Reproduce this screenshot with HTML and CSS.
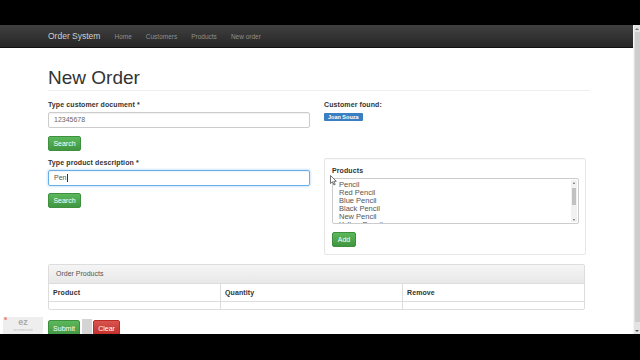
FILE: index.html
```html
<!DOCTYPE html>
<html>
<head>
<meta charset="utf-8">
<link rel="stylesheet" href="styles.css">
</head>
<body>
<div class="screen">
  <div class="letterbox top"></div>
  <div class="viewport">
    <div class="page">
      <nav class="navbar">
        <div class="nav-inner">
          <span class="brand">Order System</span>
          <a class="nav-link">Home</a>
          <a class="nav-link">Customers</a>
          <a class="nav-link">Products</a>
          <a class="nav-link">New order</a>
        </div>
      </nav>
      <main class="container">
        <h1 class="page-header">New Order</h1>
        <div class="row">
          <div class="col">
            <label class="lbl">Type customer document *</label>
            <div class="input">12345678</div>
            <button class="btn btn-success btn-search">Search</button>
            <label class="lbl lbl-2">Type product description *</label>
            <div class="input focus">Pen<span class="caret"></span></div>
            <button class="btn btn-success btn-search">Search</button>
          </div>
          <div class="col">
            <label class="lbl lbl-found">Customer found:</label>
            <div class="badge-wrap"><span class="badge">Joan Souza</span></div>
            <div class="well">
              <label class="lbl lbl-products">Products</label>
              <div class="listbox">
                <div class="options">
                  <div>Pencil</div>
                  <div>Red Pencil</div>
                  <div>Blue Pencil</div>
                  <div>Black Pencil</div>
                  <div>New Pencil</div>
                  <div>Yellow Pencil</div>
                </div>
                <div class="lb-scroll">
                  <span class="arr up"></span>
                  <span class="lb-thumb"></span>
                  <span class="arr down"></span>
                </div>
              </div>
              <button class="btn btn-success btn-add">Add</button>
              <svg class="pointer" width="7" height="11" viewBox="0 0 7 11"><path d="M0.5 0.5 L0.5 8.5 L2.5 6.8 L4 10 L5.2 9.4 L3.8 6.3 L6.3 6.3 Z" fill="#fff" stroke="#333" stroke-width="0.7"/></svg>
            </div>
          </div>
        </div>
        <div class="panel">
          <div class="panel-heading">Order Products</div>
          <div class="tbl">
            <div class="th">Product</div>
            <div class="th">Quantity</div>
            <div class="th">Remove</div>
            <div class="td"></div>
            <div class="td"></div>
            <div class="td"></div>
          </div>
        </div>
        <div class="actions">
          <button class="btn btn-success btn-submit">Submit</button>
          <button class="btn btn-danger btn-clear">Clear</button>
        </div>
      </main>
    </div>
    <div class="vscroll">
      <span class="varr"></span>
      <span class="vthumb"></span>
      <span class="varr vdown"></span>
    </div>
  </div>
  <div class="letterbox bottom"></div>
  <div class="watermark"><span class="wm-dot"></span><span class="wm-text">ez</span><span class="wm-sub">screencast</span></div>
  <div class="ghost"></div>
</div>
</body>
</html>
```

FILE: styles.css
```css
* { box-sizing: border-box; }
html, body { margin: 0; padding: 0; background: #000; }
body { font-family: "Liberation Sans", Arial, sans-serif; color: #333; }

.screen { position: relative; width: 640px; height: 360px; overflow: hidden; background: #000; }
.letterbox { background: #000; }
.letterbox.top { height: 25px; }
.letterbox.bottom { height: 26px; }

.viewport { display: flex; height: 309px; overflow: hidden; }
.page { flex: 1; background: #fff; overflow: hidden; position: relative; }

.navbar {
  height: 23px;
  background: linear-gradient(#404040, #262626);
  border-bottom: 1px solid #111;
}
.nav-inner { display: flex; align-items: center; height: 100%; padding-left: 48px; }
.brand { font-size: 8.5px; color: #cfcfcf; margin-right: 7px; }
.nav-link { font-size: 6.5px; color: #8f8f8f; padding: 0 7px; }

.container { padding-left: 48px; width: 586px; }

.page-header {
  margin: 19px 0 0;
  font-size: 19px;
  line-height: 21px;
  font-weight: normal;
  color: #333;
  padding-bottom: 2px;
  border-bottom: 1px solid #eee;
  width: 542px;
}

.row { display: grid; grid-template-columns: 262px 262px; column-gap: 14px; align-items: start; }
.col { display: flex; flex-direction: column; align-items: flex-start; }

.lbl { display: block; font-size: 7px; line-height: 10px; font-weight: bold; color: #333; margin: 9px 0 2px; letter-spacing: 0.1px; }
.lbl-2 { margin-top: 7px; }
.lbl-found { margin-bottom: 3px; }
.lbl-products { margin: 0 0 2px; }

.input {
  width: 262px; height: 16px;
  border: 1px solid #ccc; border-radius: 2px;
  padding: 0 5px;
  font-size: 7px; line-height: 14px; color: #666;
  box-shadow: inset 0 1px 1px rgba(0,0,0,0.06);
  display: flex; align-items: center;
}
.input.focus {
  border-color: #66afe9;
  box-shadow: inset 0 1px 1px rgba(0,0,0,0.06), 0 0 3px rgba(102,175,233,0.6);
  color: #555;
}
.caret { display: inline-block; width: 1px; height: 8px; background: #333; margin-left: 1px; }

.btn {
  display: block;
  font-family: "Liberation Sans", Arial, sans-serif;
  font-size: 7px; line-height: 13px;
  color: #fff; padding: 0; text-align: center;
  border-radius: 2px; cursor: pointer;
}
.btn-success { background: linear-gradient(#5cb85c, #419641); border: 1px solid #3e8f3e; }
.btn-danger { background: linear-gradient(#d9534f, #c12e2a); border: 1px solid #b92c28; }
.btn-search { margin-top: 8px; width: 33px; height: 15px; }
.btn-search:last-child { margin-top: 7px; }

.badge-wrap { display: flex; height: 8px; }
.badge {
  display: block;
  height: 8px; line-height: 8px;
  padding: 0 4px;
  background: #3a7fc1;
  color: #fff;
  font-size: 5.5px; font-weight: bold;
  border-radius: 1px;
}

.well {
  position: relative;
  width: 262px;
  margin-top: 37px;
  border: 1px solid #e6e6e6;
  border-radius: 2px;
  padding: 7px;
  background: #fff;
  box-shadow: inset 0 1px 1px rgba(0,0,0,0.03);
}
.listbox {
  display: flex;
  width: 247px; height: 46px;
  border: 1px solid #ccc; border-radius: 2px;
  overflow: hidden;
}
.options { flex: 1; padding: 2px 0 0 6px; font-size: 7.5px; line-height: 8px; color: #555; overflow: hidden; }
.lb-scroll { width: 6px; margin: 1px; background: #f1f1f1; display: flex; flex-direction: column; align-items: center; }
.arr { width: 0; height: 0; border-left: 1.5px solid transparent; border-right: 1.5px solid transparent; margin: 1.5px 0; }
.arr.up { border-bottom: 2px solid #666; }
.arr.down { border-top: 2px solid #666; margin-top: auto; }
.lb-thumb { width: 4px; height: 17px; background: #c1c1c1; margin-top: 3px; }
.btn-add { margin-top: 8px; width: 24px; height: 15px; }
.pointer { position: absolute; left: 5px; top: 16px; }

.panel { margin-top: 9px; width: 537px; border: 1px solid #ddd; border-radius: 2px; }
.panel-heading {
  height: 19px; line-height: 18px;
  padding-left: 7px;
  font-size: 7px; color: #555;
  background: linear-gradient(#f5f5f5, #e8e8e8);
  border-bottom: 1px solid #ddd;
}
.tbl { display: grid; grid-template-columns: 172px 182px 1fr; }
.th { height: 18px; line-height: 18px; padding-left: 4px; font-size: 7px; font-weight: bold; color: #333; border-bottom: 1px solid #ddd; border-right: 1px solid #ddd; letter-spacing: 0.1px; }
.td { height: 7px; border-right: 1px solid #ddd; }
.th:nth-child(3), .td:nth-child(6) { border-right: none; }

.actions { display: flex; margin-top: 10px; }
.btn-submit { width: 32px; height: 16px; }
.btn-clear { width: 27px; height: 16px; margin-left: 13px; }

.vscroll { width: 7px; background: #e3e3e3; border-left: 1px solid #f4f4f4; display: flex; flex-direction: column; align-items: center; }
.varr { width: 0; height: 0; margin: 3px 0 2px; border-left: 2px solid transparent; border-right: 2px solid transparent; border-bottom: 2px solid #777; }
.varr.vdown { border-bottom: none; border-top: 2px solid #555; margin-top: auto; }
.vthumb { width: 5px; height: 290px; background: #cdcdcd; }

.watermark {
  position: absolute; left: 3px; top: 317px;
  width: 40px; height: 17px;
  background: rgba(235,235,235,0.85);
  display: flex; flex-direction: column; align-items: center;
}
.wm-dot { position: absolute; left: 1px; top: 0; width: 3px; height: 3px; border-radius: 50%; background: #e88; }
.wm-text { font-size: 9px; line-height: 10px; color: #aaa; font-weight: bold; }
.wm-sub { font-size: 4px; line-height: 5px; color: #bbb; }
.ghost { position: absolute; left: 82px; top: 319px; width: 10px; height: 15px; background: #d4d4d4; }
```
